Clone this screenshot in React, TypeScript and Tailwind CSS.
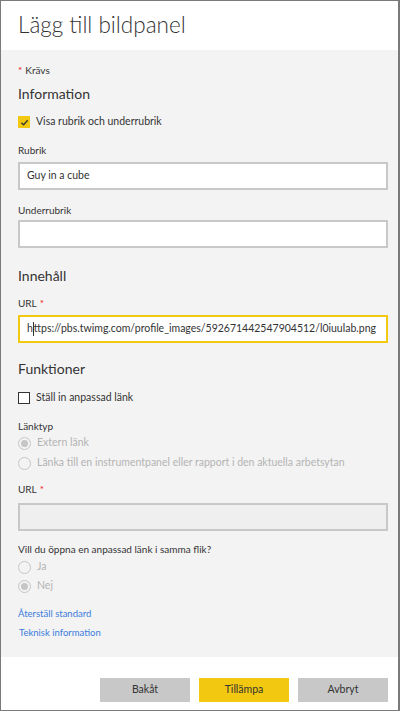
import React from "react";

const font = { fontFamily: 'Lato, "Open Sans", sans-serif' };

const Label: React.FC<{ text: string; required?: boolean; className?: string }> = ({ text, required, className }) => (
  <div className={`h-[14px] flex items-center text-[10px] text-[#333] ${className ?? ""}`}>
    {text}
    {required && <span className="ml-[3px] text-[#e81123]">*</span>}
  </div>
);

const Radio: React.FC<{ label: string; checked?: boolean; className?: string }> = ({ label, checked, className }) => (
  <div className={`h-[16px] flex items-center gap-[6px] text-[10.5px] text-[#b3b3b3] whitespace-nowrap ${className ?? ""}`}>
    <span className="w-[13px] h-[13px] rounded-full border border-[#c6c6c6] flex items-center justify-center shrink-0">
      {checked && <span className="w-[7px] h-[7px] rounded-full bg-[#c6c6c6]" />}
    </span>
    {label}
  </div>
);

export default function App() {
  return (
    <div
      className="w-[400px] h-[711px] border border-[#7a7a7a] border-r-2 flex flex-col bg-white overflow-hidden"
      style={font}
    >
      {/* Header */}
      <div className="h-[49px] shrink-0 pl-[17px] flex items-center">
        <h1 className="text-[22.5px] font-light text-[#333] leading-none">Lägg till bildpanel</h1>
      </div>

      {/* Body */}
      <div className="flex-1 bg-[#f3f3f3] pl-[17px] pr-[10px] flex flex-col">
        <div className="mt-[13px] h-[14px] flex items-center text-[10px] text-[#333]">
          <span className="text-[#e81123] mr-[3px]">*</span>Krävs
        </div>

        <div className="mt-[6px] h-[20px] flex items-center text-[14px] text-[#333]">Information</div>

        <div className="mt-[11px] h-[16px] flex items-center gap-[6px] text-[10.5px] text-[#333]">
          <span className="w-[12px] h-[12px] bg-[#f2c811] flex items-center justify-center shrink-0">
            <svg width="9" height="9" viewBox="0 0 10 10" fill="none">
              <path d="M1.5 5.2 L4 7.5 L8.5 2.5" stroke="#333" strokeWidth="1.4" />
            </svg>
          </span>
          Visa rubrik och underrubrik
        </div>

        <Label text="Rubrik" className="mt-[13px]" />
        <div className="mt-[5px] h-[28px] border-2 border-[#c8c8c8] bg-white flex items-center px-[7px] text-[10.5px] text-[#333]">
          Guy in a cube
        </div>

        <Label text="Underrubrik" className="mt-[13px]" />
        <div className="mt-[3px] h-[28px] border-2 border-[#c8c8c8] bg-white" />

        <div className="mt-[17px] h-[20px] flex items-center text-[14px] text-[#333]">Innehåll</div>

        <Label text="URL" required className="mt-[11px]" />
        <div className="mt-[5px] h-[28px] border-2 border-[#f2c811] bg-white flex items-center px-[7px] text-[10.5px] text-[#333] whitespace-nowrap overflow-hidden">
          <span>h</span>
          <span className="w-px h-[14px] bg-[#333] shrink-0" />
          <span>ttps://pbs.twimg.com/profile_images/592671442547904512/l0iuulab.png</span>
        </div>

        <div className="mt-[15px] h-[20px] flex items-center text-[14px] text-[#333]">Funktioner</div>

        <div className="mt-[12px] h-[16px] flex items-center gap-[6px] text-[10.5px] text-[#333]">
          <span className="w-[12px] h-[12px] border border-[#333] bg-white shrink-0" />
          Ställ in anpassad länk
        </div>

        <Label text="Länktyp" className="mt-[13px]" />
        <Radio label="Extern länk" checked className="mt-[2px]" />
        <Radio label="Länka till en instrumentpanel eller rapport i den aktuella arbetsytan" className="mt-[4px]" />

        <Label text="URL" required className="mt-[11px]" />
        <div className="mt-[7px] h-[28px] border-2 border-[#c8c8c8] bg-[#efefef]" />

        <Label text="Vill du öppna en anpassad länk i samma flik?" className="mt-[11px]" />
        <Radio label="Ja" className="mt-[3px]" />
        <Radio label="Nej" checked className="mt-[3px]" />

        <div className="mt-[13px] h-[14px] flex items-center text-[9.5px] text-[#3b7ddd]">Återställ standard</div>
        <div className="mt-[5px] h-[14px] flex items-center text-[9.5px] text-[#3b7ddd] pl-[1px]">Teknisk information</div>
      </div>

      {/* Footer */}
      <div className="h-[53px] shrink-0 flex justify-end items-start pt-[21px] pr-[10px] gap-[9px]">
        <button className="w-[90px] h-[24px] bg-[#c8c8c8] text-[10.5px] text-[#333]">Bakåt</button>
        <button className="w-[90px] h-[24px] bg-[#f2c811] text-[10.5px] text-[#333]">Tillämpa</button>
        <button className="w-[90px] h-[24px] bg-[#c8c8c8] text-[10.5px] text-[#333]">Avbryt</button>
      </div>
    </div>
  );
}
